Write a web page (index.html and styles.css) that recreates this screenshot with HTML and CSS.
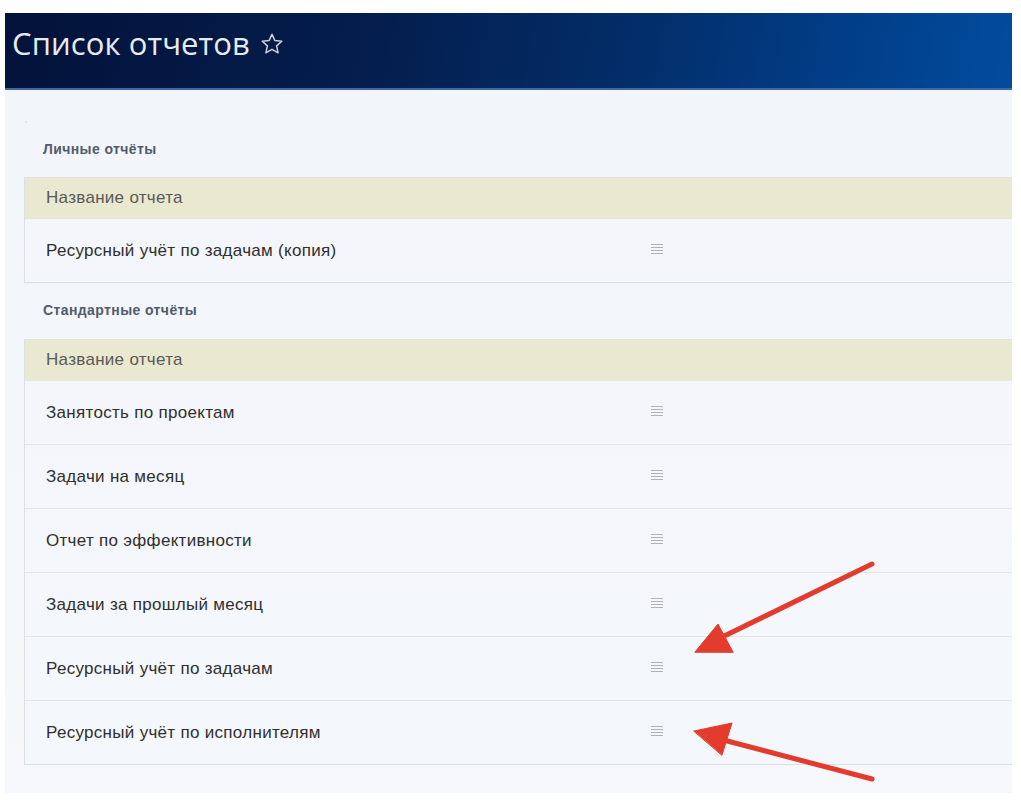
FILE: index.html
```html
<!DOCTYPE html>
<html lang="ru">
<head>
<meta charset="utf-8">
<title>Список отчетов</title>
<link rel="stylesheet" href="styles.css">
</head>
<body>
<div class="page">
  <header class="header">
    <h1 class="title">Список отчетов</h1>
    <svg class="star" viewBox="0 0 24 24" width="24" height="24"><path d="M12 2.2l2.9 6.4 6.9.7-5.2 4.6 1.5 6.9L12 17.3l-6.1 3.5 1.5-6.9-5.2-4.6 6.9-.7z" fill="none" stroke="#c9d0dc" stroke-width="1.5" stroke-linejoin="round"/></svg>
  </header>
  <main class="panel">
    <span class="dot"></span>
    <h2 class="section-title">Личные отчёты</h2>
    <div class="table">
      <div class="thead">Название отчета</div>
      <div class="row"><span class="name">Ресурсный учёт по задачам (копия)</span><span class="menu"></span></div>
    </div>
    <h2 class="section-title second">Стандартные отчёты</h2>
    <div class="table">
      <div class="thead">Название отчета</div>
      <div class="row"><span class="name">Занятость по проектам</span><span class="menu"></span></div>
      <div class="row"><span class="name">Задачи на месяц</span><span class="menu"></span></div>
      <div class="row"><span class="name">Отчет по эффективности</span><span class="menu"></span></div>
      <div class="row"><span class="name">Задачи за прошлый месяц</span><span class="menu"></span></div>
      <div class="row"><span class="name">Ресурсный учёт по задачам</span><span class="menu"></span></div>
      <div class="row"><span class="name">Ресурсный учёт по исполнителям</span><span class="menu"></span></div>
    </div>
  </main>
</div>
<svg class="arrows" width="1021" height="811" viewBox="0 0 1021 811">
  <g fill="#e33b2e" stroke="#e33b2e" stroke-linecap="round" stroke-linejoin="round">
    <line x1="872" y1="564" x2="712" y2="642" stroke-width="5"/>
    <polygon points="695,652 718,624 733,652" stroke-width="1"/>
    <line x1="872" y1="779" x2="712" y2="737" stroke-width="5"/>
    <polygon points="694,731 732,723 722,755" stroke-width="1"/>
  </g>
</svg>
</body>
</html>
```

FILE: styles.css
```css
html, body {
  margin: 0;
  padding: 0;
  background: #ffffff;
}

body {
  position: relative;
  width: 1021px;
  height: 811px;
  overflow: hidden;
  font-family: "Liberation Sans", Arial, sans-serif;
}

.page {
  margin: 13px 9px 0 5px;
  width: 1007px;
}

.header {
  box-sizing: border-box;
  height: 77px;
  display: flex;
  align-items: flex-start;
  gap: 10px;
  padding: 9px 0 0 7px;
  background: linear-gradient(100deg, #03123a 0%, #041d4c 35%, #032c66 60%, #013d86 82%, #014c9e 100%);
  border-bottom: 2px solid #3b6aa6;
}

.title {
  margin: 0;
  font-family: "Open Sans", "Noto Sans", sans-serif;
  font-weight: 400;
  font-size: 31px;
  line-height: 42px;
  letter-spacing: 0.1px;
  color: #e6ebf2;
}

.star {
  margin-top: 10px;
}

.panel {
  position: relative;
  padding: 48px 0 28px 19px;
  background: linear-gradient(180deg, #f2f5f9 0%, #f3f6fa 50%, #f6f8fb 100%);
}

.dot {
  position: absolute;
  left: 20px;
  top: 31px;
  width: 2px;
  height: 2px;
  background: #e8e2cc;
}

.section-title {
  margin: 0 0 17px 19px;
  height: 22px;
  line-height: 22px;
  font-size: 14px;
  letter-spacing: 0.4px;
  font-weight: 700;
  color: #525b6b;
}

.section-title.second {
  margin-top: 16px;
  margin-bottom: 18px;
}

.table {
  border-left: 1px solid #dcdfe3;
  border-top: 1px solid #e2e2d6;
}

.thead {
  height: 40px;
  line-height: 40px;
  padding-left: 21px;
  font-size: 17px;
  letter-spacing: 0.3px;
  color: #5a5a56;
  background: #e9e8d1;
}

.row {
  height: 63px;
  display: flex;
  align-items: center;
  border-top: 1px solid #e3e5e9;
  border-bottom: 1px solid #dcdfe3;
  margin-top: -1px;
  background: rgba(244, 247, 251, 0.7);
}

.thead + .row {
  margin-top: 0;
  height: 63px;
  border-top: 1px solid #e6e6dc;
}

.name {
  width: 605px;
  padding-left: 21px;
  font-size: 17px;
  letter-spacing: 0.3px;
  color: #2f2f2f;
}

.menu {
  width: 12px;
  height: 10px;
  margin-bottom: 4px;
  background: repeating-linear-gradient(180deg, #b1b1b1 0, #b1b1b1 1px, transparent 1px, transparent 3px);
}

.arrows {
  position: absolute;
  left: 0;
  top: 0;
  pointer-events: none;
}
```
